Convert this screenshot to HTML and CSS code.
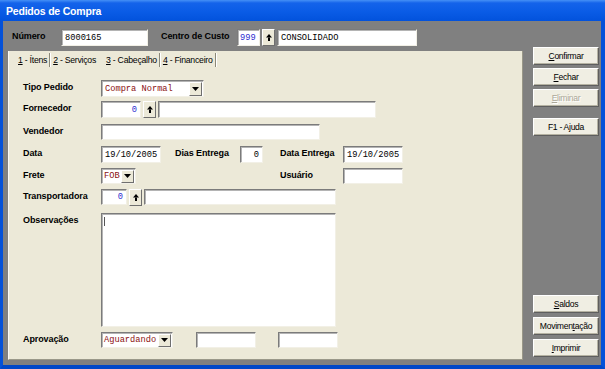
FILE: index.html
```html
<!DOCTYPE html>
<html lang="pt-BR">
<head>
    <meta charset="UTF-8">
    <title>Pedidos de Compra</title>
    <link rel="stylesheet" href="styles.css">
</head>
<body>
    <div class="window">
        <div class="titlebar">Pedidos de Compra</div>
        <div class="client">
            <div class="main">
                <div class="header-row">
                    <span class="lbl lbl-numero">Número</span>
                    <span class="field mono w-numero">8000165</span>
                    <span class="lbl lbl-centro">Centro de Custo</span>
                    <span class="field mono blue w-cc">999</span>
                    <span class="lookup"><svg width="6" height="7" viewBox="0 0 6 7"><polygon points="3,0 6,3.5 0,3.5" fill="#000"/><rect x="2" y="3.5" width="2" height="3.5" fill="#000"/></svg></span>
                    <span class="field mono w-ccname">CONSOLIDADO</span>
                </div>

                <div class="tabs">
                    <div class="tabstrip">
                        <span class="tab"><u>1</u> - Ítens</span>
                        <span class="sep"></span>
                        <span class="tab"><u>2</u> - Serviços</span>
                        <span class="tab active"><u>3</u> - Cabeçalho</span>
                        <span class="sep"></span>
                        <span class="tab"><u>4</u> - Financeiro</span>
                        <span class="sep"></span>
                    </div>

                    <div class="page">
                        <div class="row r-tipo">
                            <span class="lbl">Tipo Pedido</span>
                            <span class="field select w-tipo">
                                <span class="mono red">Compra Normal</span>
                                <span class="dd"><svg width="7" height="4" viewBox="0 0 7 4"><polygon points="0,0 7,0 3.5,4" fill="#000"/></svg></span>
                            </span>
                        </div>
                        <div class="row r-forn">
                            <span class="lbl">Fornecedor</span>
                            <span class="field mono blue num w-code">0</span>
                            <span class="lookup"><svg width="6" height="7" viewBox="0 0 6 7"><polygon points="3,0 6,3.5 0,3.5" fill="#000"/><rect x="2" y="3.5" width="2" height="3.5" fill="#000"/></svg></span>
                            <span class="field w-fornname"></span>
                        </div>
                        <div class="row r-vend">
                            <span class="lbl">Vendedor</span>
                            <span class="field w-vend"></span>
                        </div>
                        <div class="row r-data">
                            <span class="lbl">Data</span>
                            <span class="field mono w-date">19/10/2005</span>
                            <span class="lbl lbl-dias">Dias Entrega</span>
                            <span class="field mono num w-dias">0</span>
                            <span class="lbl lbl-entrega">Data Entrega</span>
                            <span class="field mono w-date">19/10/2005</span>
                        </div>
                        <div class="row r-frete">
                            <span class="lbl">Frete</span>
                            <span class="field select w-frete">
                                <span class="mono red">FOB</span>
                                <span class="dd"><svg width="7" height="4" viewBox="0 0 7 4"><polygon points="0,0 7,0 3.5,4" fill="#000"/></svg></span>
                            </span>
                            <span class="lbl lbl-usuario">Usuário</span>
                            <span class="field w-date"></span>
                        </div>
                        <div class="row r-transp">
                            <span class="lbl">Transportadora</span>
                            <span class="field mono blue num w-tcode">0</span>
                            <span class="lookup"><svg width="6" height="7" viewBox="0 0 6 7"><polygon points="3,0 6,3.5 0,3.5" fill="#000"/><rect x="2" y="3.5" width="2" height="3.5" fill="#000"/></svg></span>
                            <span class="field w-tname"></span>
                        </div>
                        <div class="row r-obs">
                            <span class="lbl">Observações</span>
                            <span class="field memo"><span class="caret"></span></span>
                        </div>
                        <div class="row r-aprov">
                            <span class="lbl">Aprovação</span>
                            <span class="field select w-aprov">
                                <span class="mono red">Aguardando</span>
                                <span class="dd"><svg width="7" height="4" viewBox="0 0 7 4"><polygon points="0,0 7,0 3.5,4" fill="#000"/></svg></span>
                            </span>
                            <span class="field w-aprov1"></span>
                            <span class="field w-aprov2"></span>
                        </div>
                    </div>
                </div>
            </div>

            <div class="buttons">
                <button class="btn"><u>C</u>onfirmar</button>
                <button class="btn"><u>F</u>echar</button>
                <button class="btn disabled"><u>E</u>liminar</button>
                <button class="btn btn-help">F1 - Ajuda</button>
                <div class="spacer"></div>
                <button class="btn"><u>S</u>aldos</button>
                <button class="btn">Movimen<u>t</u>ação</button>
                <button class="btn"><u>I</u>mprimir</button>
            </div>
        </div>
    </div>
</body>
</html>
```

FILE: styles.css
```css
body {
    margin: 0;
    font-family: "Liberation Sans", Arial, sans-serif;
    font-size: 8px;
    color: #000;
}
.window {
    width: 605px;
    height: 369px;
    box-sizing: border-box;
    background-color: #0053e0;
    border-left: 3px solid #0451d9;
    border-right: 4px solid #0451d9;
    border-bottom: 4px solid #0047c8;
    display: flex;
    flex-direction: column;
}
.titlebar {
    height: 21px;
    margin-left: -3px;
    margin-right: -4px;
    padding-left: 6px;
    background: linear-gradient(#4590f6 0, #1463ea 3px, #0a5ce6 55%, #0252dc 100%);
    color: #fff;
    font-weight: bold;
    font-size: 10.5px;
    letter-spacing: -0.2px;
    line-height: 22px;
}
.client {
    flex: 1;
    background-color: #808080;
    display: flex;
    padding: 8px 2px 5px 5px;
}
.main {
    width: 515px;
    display: flex;
    flex-direction: column;
}

/* labels and fields */
.lbl {
    font-weight: bold;
    font-size: 9px;
    letter-spacing: -0.1px;
    line-height: 13px;
    width: 78px;
    flex-shrink: 0;
}
.field {
    height: 17px;
    box-sizing: border-box;
    background-color: #fff;
    border-top: 1px solid #7b7b7b;
    border-left: 1px solid #7b7b7b;
    border-right: 1px solid #f2f0e6;
    border-bottom: 1px solid #f2f0e6;
    box-shadow: inset 1px 1px 0 #b4b4b4;
    padding: 0 3px;
    display: flex;
    align-items: center;
    flex-shrink: 0;
}
.mono {
    font-family: "Liberation Mono", "Courier New", monospace;
    font-size: 8.7px;
}
.blue { color: #2c2cd0; }
.red { color: #8b1010; }
.num { justify-content: flex-end; }

.lookup {
    width: 13px;
    height: 17px;
    box-sizing: border-box;
    margin: 0 2px;
    background-color: #ece9d8;
    border: 1px solid;
    border-color: #fff #6f6f6f #6f6f6f #fff;
    display: flex;
    align-items: center;
    justify-content: center;
    flex-shrink: 0;
}
.select {
    justify-content: space-between;
    padding-right: 1px;
}
.dd {
    width: 13px;
    height: 14px;
    box-sizing: border-box;
    background-color: #ece9d8;
    border: 1px solid;
    border-color: #fff #6f6f6f #6f6f6f #fff;
    display: flex;
    align-items: center;
    justify-content: center;
}

/* header row */
.header-row {
    display: flex;
    align-items: flex-start;
    height: 17px;
}
.lbl-numero {
    width: 49px;
    margin-left: 4px;
    padding-top: 1px;
}
.lbl-centro {
    width: 76px;
    margin-left: 13px;
    padding-top: 1px;
}
.w-numero { width: 87px; }
.w-cc { width: 23px; padding: 0 2px; }
.w-ccname { width: 140px; }

/* tabs */
.tabs {
    margin-top: 5px;
    flex: 1;
    background-color: #ece9d8;
    border-left: 1px solid #fbfaf6;
    border-right: 1px solid #9a9889;
    border-bottom: 1px solid #9a9889;
    display: flex;
    flex-direction: column;
}
.tabstrip {
    height: 16px;
    display: flex;
    align-items: center;
    padding-left: 7px;
    font-size: 8.7px;
    letter-spacing: -0.25px;
}
.tab {
    padding: 0 2px;
    line-height: 14px;
    margin-top: 2px;
}
.tab.active {
    margin-left: 6px;
}
.sep {
    width: 1px;
    height: 14px;
    margin-top: 2px;
    background-color: #8a8878;
    border-right: 1px solid #fff;
}
.page {
    flex: 1;
    padding: 13px 0 0 14px;
    display: flex;
    flex-direction: column;
}
.row {
    display: flex;
    align-items: flex-start;
}
.row .lbl { padding-top: 1px; }
.r-forn { margin-top: 4px; }
.r-vend { margin-top: 6px; }
.r-data { margin-top: 6px; }
.r-frete { margin-top: 5px; }
.r-transp { margin-top: 5px; }
.r-obs { margin-top: 7px; }
.r-aprov { margin-top: 5px; }
.r-vend .field, .r-frete .field, .r-transp .field, .r-aprov .field { height: 16px; }
.r-frete .dd, .r-aprov .dd { height: 13px; }

.w-tipo { width: 103px; }
.w-code { width: 40px; }
.w-fornname { width: 218px; }
.w-vend { width: 219px; }
.w-date { width: 60px; }
.w-dias { width: 23px; }
.lbl-dias { width: 65px; margin-left: 14px; }
.lbl-entrega { width: 63px; margin-left: 17px; }
.w-frete { width: 35px; padding-left: 2px; }
.lbl-usuario { width: 63px; margin-left: 144px; }
.w-tcode { width: 26px; }
.w-tname { width: 192px; }
.memo {
    width: 235px;
    height: 114px;
    align-items: flex-start;
    padding: 3px 2px;
}
.caret {
    width: 1px;
    height: 9px;
    background-color: #555;
}
.w-aprov { width: 72px; padding-left: 2px; }
.w-aprov1 { width: 60px; margin-left: 23px; }
.w-aprov2 { width: 60px; margin-left: 22px; }

/* buttons */
.buttons {
    width: 66px;
    margin-left: 10px;
    padding-top: 18px;
    padding-bottom: 3px;
    display: flex;
    flex-direction: column;
    gap: 3px;
}
.btn {
    height: 18px;
    padding: 0;
    font-family: "Liberation Sans", Arial, sans-serif;
    font-size: 8.6px;
    letter-spacing: -0.3px;
    color: #000;
    background-color: #f0eee3;
    border: 1px solid;
    border-color: #fff #5e5e5e #5e5e5e #fff;
    box-shadow: inset -1px -1px 0 #b5b2a2;
}
.btn.disabled {
    color: #aca899;
    text-shadow: 1px 1px 0 #fff;
}
.btn-help {
    margin-top: 8px;
}
.spacer {
    flex: 1;
}
.buttons .spacer + .btn ~ .btn {
    margin-top: 1px;
}
```
